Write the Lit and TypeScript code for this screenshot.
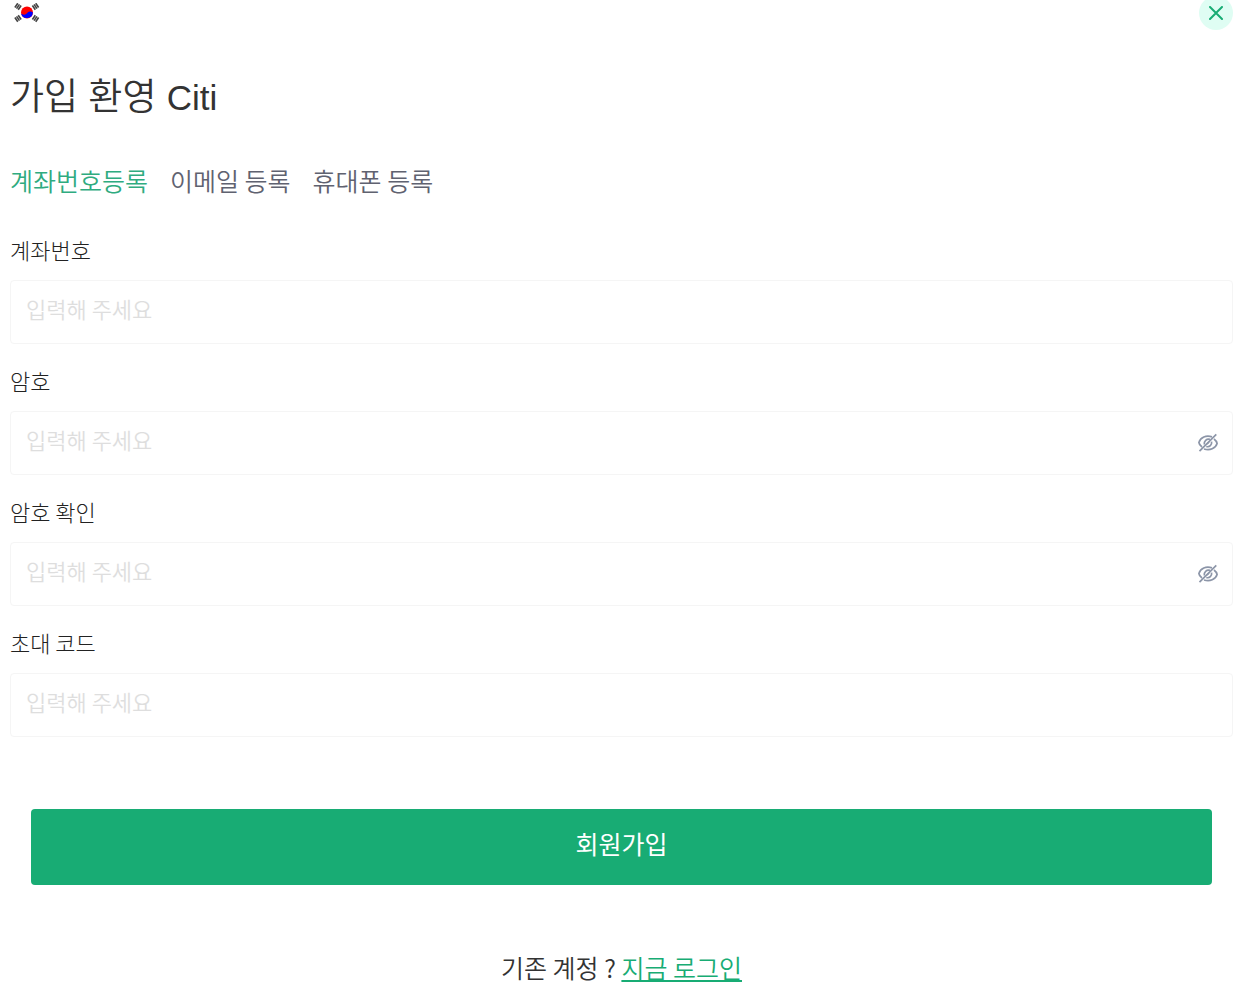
import { LitElement, html, svg, css } from "lit";
import { customElement, state } from "lit/decorators.js";

const trigram = (x: number, y: number, angle: number) => svg`
  <g transform="translate(${x} ${y}) rotate(${angle})" stroke="#444" stroke-width="1.6">
    <path d="M-2.600 -2H2.600M-2.600 0H2.600M-2.600 2H2.600" />
  </g>`;

@customElement("form-field")
class FormField extends LitElement {
  static properties = {
    label: {},
    secret: { type: Boolean },
    shown: { state: true },
  };
  declare label: string;
  declare secret: boolean;
  declare shown: boolean;

  static styles = css`
    :host {
      display: block;
    }
    .label {
      display: block;
      font-size: 22px;
      font-weight: 300;
      line-height: 30px;
      color: #222;
    }
    .box {
      display: flex;
      align-items: center;
      box-sizing: border-box;
      height: 64px;
      margin-top: 16px;
      padding: 0 14px 0 15px;
      border: 1px solid #f5f5f5;
      border-radius: 4px;
    }
    .box:focus-within {
      border-color: #18ac74;
    }
    .input {
      flex: 1;
      box-sizing: border-box;
      min-width: 0;
      height: 62px;
      padding: 0 0 8px;
      border: 0;
      outline: 0;
      background: none;
      font: inherit;
      font-size: 22px;
      font-weight: 350;
      color: #333;
    }
    .input::placeholder {
      color: #dedede;
      opacity: 1;
    }
    .eye {
      display: flex;
      padding: 0;
      border: 0;
      background: none;
      color: #8c95a8;
      cursor: pointer;
    }
  `;

  render() {
    return html`
      <label class="label" for="field">${this.label}</label>
      <div class="box">
        <input
          class="input"
          id="field"
          type=${this.secret && !this.shown ? "password" : "text"}
          placeholder="입력해 주세요"
        />
        ${this.secret
          ? html`<button
              class="eye"
              type="button"
              aria-label=${this.label}
              @click=${() => (this.shown = !this.shown)}
            >
              <svg width="20" height="20" viewBox="0 0 20 20" fill="none" stroke="currentColor" stroke-width="1.7">
                <path d="M14 3.900C8 1.900 2.500 4.500 .9 9.500c.3 2 1.400 3.300 3.100 4.500M6 16C12 17.800 17.500 15.500 19.100 10.500c-.3-1.900-1.500-3.300-3.100-4.500" />
                <path d="M12 6.400C8.500 5.500 5.800 8 6.300 11.500M8.300 13.500c3.200 1 5.800-1.500 5.300-4.900M9 11l2-2" />
                <path d="M1.500 18.200 18.300 1.300" />
              </svg>
            </button>`
          : null}
      </div>
    `;
  }
}

@customElement("app-root")
class AppRoot extends LitElement {
  @state() private tab = 0;

  private tabs = ["계좌번호등록", "이메일 등록", "휴대폰 등록"];

  static styles = css`
    :host {
      display: block;
      padding: 0 2px 0 10px;
      font-family: "Noto Sans CJK KR", sans-serif;
      color: #333;
      background: #fff;
    }
    .top {
      display: flex;
      justify-content: space-between;
      align-items: center;
      height: 34px;
      margin-top: -4px;
    }
    .flag,
    .close {
      display: flex;
      align-items: center;
      justify-content: center;
      height: 34px;
      padding: 0;
      border: 0;
      background: none;
      cursor: pointer;
    }
    .flag {
      width: 34px;
    }
    .close {
      width: 34px;
      border-radius: 50%;
      background: #dffdf3;
      color: #18ac74;
    }
    .title {
      margin: 41px 0 0;
      font-family: "Liberation Sans", "Noto Sans CJK KR", sans-serif;
      font-size: 37px;
      font-weight: 350;
      line-height: 54px;
    }
    .brand {
      font-size: 35px;
    }
    .tabs {
      display: flex;
      gap: 22px;
      margin-top: 37px;
    }
    .tab {
      padding: 0;
      border: 0;
      background: none;
      font: inherit;
      font-size: 25px;
      font-weight: 350;
      line-height: 36px;
      color: #5f6270;
      cursor: pointer;
    }
    .tab.active {
      color: #2fab80;
    }
    .fields {
      display: grid;
      gap: 21px;
      margin-top: 36px;
    }
    .submit {
      display: block;
      width: calc(100% - 42px);
      height: 76px;
      margin: 72px 21px 0;
      padding: 0 0 8px;
      border: 0;
      border-radius: 4px;
      background: #18ac74;
      color: #fff;
      font: inherit;
      font-size: 25px;
      cursor: pointer;
    }
    .login {
      margin: 64px 0 0;
      font-size: 25px;
      font-weight: 350;
      line-height: 36px;
      text-align: center;
    }
    .link {
      color: #18ac74;
      text-underline-offset: 2px;
      text-decoration-thickness: 2px;
    }
  `;

  render() {
    return html`
      <header class="top">
        <button class="flag" type="button" aria-label="한국어">
          <svg width="26" height="20" viewBox="0 0 26 20">
            ${trigram(4, 3.5, -56)} ${trigram(21.5, 3.5, 56)} ${trigram(4, 15.5, 56)} ${trigram(21.5, 15.5, -56)}
            <circle cx="13" cy="9.500" r="6" fill="#f00" />
            <path d="M7.100 10.500A4 4 0 0 0 13 10.200A4 4 0 0 1 18.900 9.500A6 6 0 0 1 7.100 10.500Z" fill="#00f" />
          </svg>
        </button>
        <button class="close" type="button" aria-label="닫기">
          <svg width="14" height="14" viewBox="0 0 14 14" fill="none" stroke="currentColor" stroke-width="2" stroke-linecap="round">
            <path d="M1 1 13 13M13 1 1 13" />
          </svg>
        </button>
      </header>
      <h1 class="title">가입 환영 <span class="brand">Citi</span></h1>
      <nav class="tabs">
        ${this.tabs.map(
          (name, i) => html`<button
            type="button"
            class="tab ${i === this.tab ? "active" : ""}"
            @click=${() => (this.tab = i)}
          >${name}</button>`
        )}
      </nav>
      <form @submit=${(e: Event) => e.preventDefault()}>
        <div class="fields">
          <form-field label="계좌번호"></form-field>
          <form-field label="암호" secret></form-field>
          <form-field label="암호 확인" secret></form-field>
          <form-field label="초대 코드"></form-field>
        </div>
        <button class="submit" type="submit">회원가입</button>
      </form>
      <p class="login">기존 계정 ? <a class="link" href="#login">지금 로그인</a></p>
    `;
  }
}
